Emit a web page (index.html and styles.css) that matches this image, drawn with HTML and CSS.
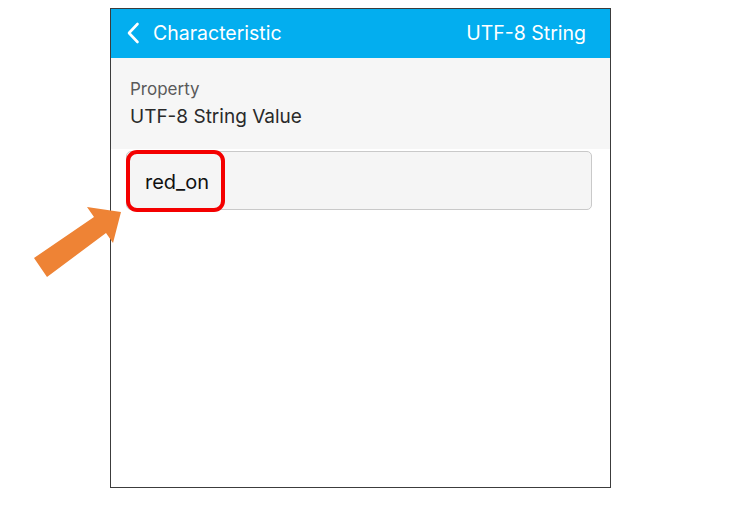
FILE: index.html
```html
<!DOCTYPE html>
<html>
<head>
<meta charset="utf-8">
<link rel="stylesheet" href="styles.css">
</head>
<body>
<div class="stage">
  <div class="phone">
    <div class="navbar">
      <div class="nav-left">
        <svg class="chev" width="14" height="22" viewBox="0 0 14 22"><path d="M11.5 2 L3 11 L11.5 20" fill="none" stroke="#fff" stroke-width="2.6" stroke-linecap="round" stroke-linejoin="round"/></svg>
        <span class="nav-title">Characteristic</span>
      </div>
      <span class="nav-right">UTF-8 String</span>
    </div>
    <div class="prop">
      <div class="prop-label">Property</div>
      <div class="prop-value">UTF-8 String Value</div>
    </div>
    <div class="field-wrap">
      <div class="field">
        <span class="field-text">red_on</span>
      </div>
      <div class="highlight"></div>
    </div>
  </div>
  <svg class="arrow" width="130" height="290" viewBox="0 0 130 290">
    <polygon points="34,258 94,217 87,207 121,212 113,243 106,233 47,277" fill="#ee8335"/>
  </svg>
</div>
</body>
</html>
```

FILE: styles.css
```css
html, body {
  margin: 0;
  padding: 0;
  background: #fff;
}
body {
  font-family: "Inter", "Liberation Sans", sans-serif;
}
.stage {
  position: relative;
  width: 730px;
  height: 520px;
  padding-top: 8px;
  box-sizing: border-box;
}
.phone {
  margin-left: 110px;
  width: 501px;
  height: 480px;
  box-sizing: border-box;
  border: 1.5px solid #3c3c3c;
  background: #fff;
  display: flex;
  flex-direction: column;
}
.navbar {
  height: 49px;
  background: #03aeef;
  display: flex;
  align-items: center;
  justify-content: space-between;
  padding: 0 24px 2px 15px;
  box-sizing: border-box;
  color: #fff;
  font-size: 19.5px;
  flex-shrink: 0;
}
.nav-left {
  display: flex;
  align-items: center;
  gap: 13px;
}
.chev {
  display: block;
}
.prop {
  background: #f6f6f6;
  height: 91px;
  box-sizing: border-box;
  padding: 21px 19px 0;
}
.prop-label {
  font-size: 17px;
  color: #5a5a5a;
  line-height: 20px;
}
.prop-value {
  font-size: 19px;
  color: #2a2a2a;
  line-height: 24px;
  margin-top: 6px;
}
.field-wrap {
  position: relative;
  padding: 2px 18px 0 15px;
}
.field {
  height: 59px;
  box-sizing: border-box;
  border: 1px solid #c9c9c9;
  border-radius: 5px;
  background: #f5f5f5;
  display: flex;
  align-items: center;
  padding-left: 18px;
  padding-top: 2px;
}
.field-text {
  font-size: 20px;
  color: #111;
}
.highlight {
  position: absolute;
  left: 15px;
  top: 1px;
  width: 99px;
  height: 62px;
  box-sizing: border-box;
  border: 4.5px solid #f40000;
  border-radius: 11px;
}
.arrow {
  position: absolute;
  left: 0;
  top: 0;
}
```
